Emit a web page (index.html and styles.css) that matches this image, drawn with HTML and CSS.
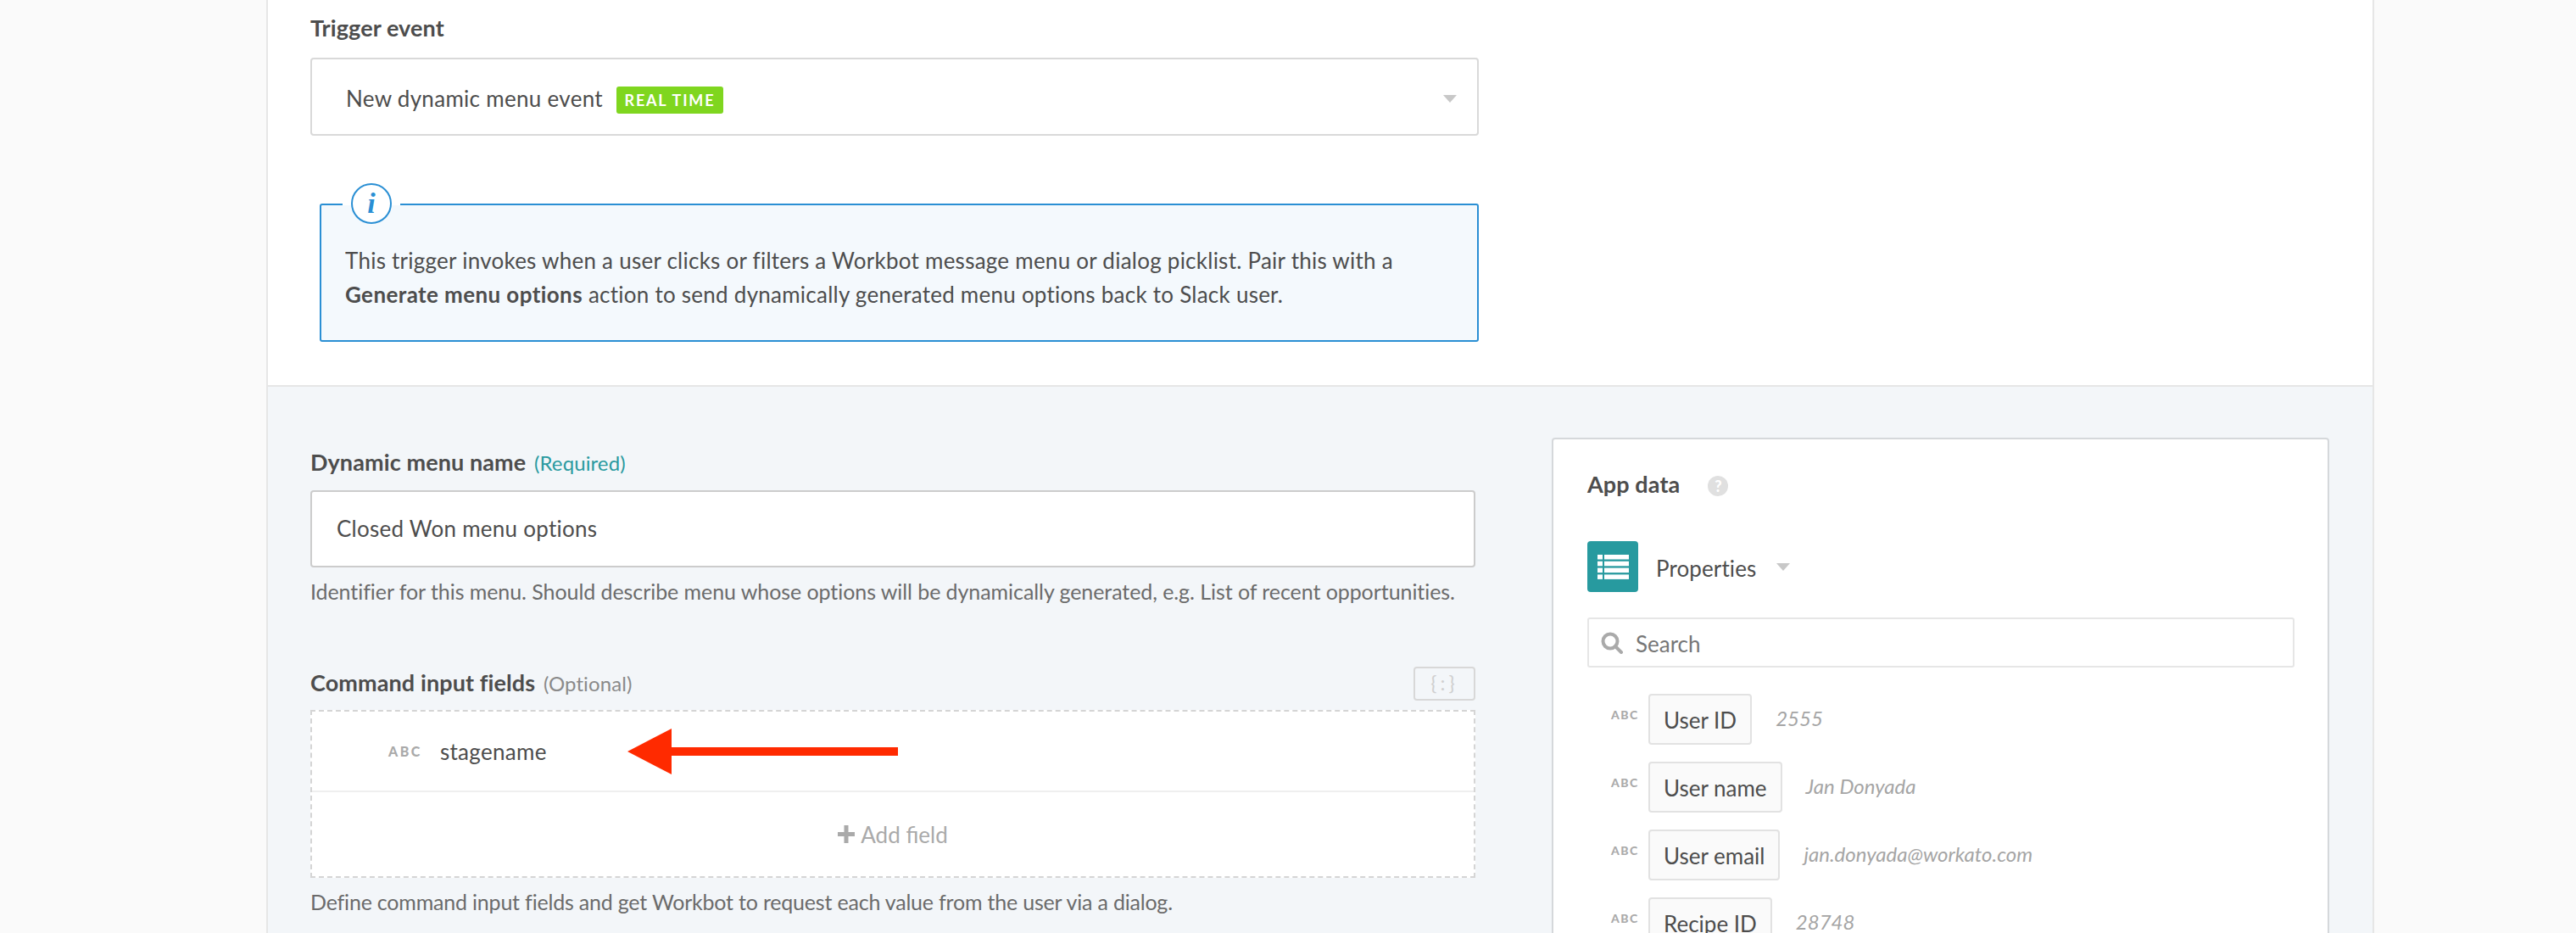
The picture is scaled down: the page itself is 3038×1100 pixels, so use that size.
FILE: index.html
```html
<!DOCTYPE html>
<html lang="en">
<head>
    <meta charset="UTF-8">
    <title>Trigger event</title>
    <link rel="stylesheet" href="styles.css">
</head>
<body>
    <div class="card">
        <section class="top">
            <div class="label trigger-label">Trigger event</div>
            <div class="select">
                <span class="select-text">New dynamic menu event</span>
                <span class="badge">REAL TIME</span>
                <span class="caret select-caret"></span>
            </div>
            <div class="info">
                <span class="info-gap"></span>
                <span class="info-icon">i</span>
                <p>This trigger invokes when a user clicks or filters a Workbot message menu or dialog picklist. Pair this with a<br><b>Generate menu options</b> action to send dynamically generated menu options back to Slack user.</p>
            </div>
        </section>

        <section class="bottom">
            <div class="form">
                <div class="label name-label">Dynamic menu name <span class="required">(Required)</span></div>
                <div class="input">Closed Won menu options</div>
                <div class="hint">Identifier for this menu. Should describe menu whose options will be dynamically generated, e.g. List of recent opportunities.</div>

                <div class="command-head">
                    <div class="label">Command input fields <span class="optional">(Optional)</span></div>
                    <div class="formula">{:}</div>
                </div>
                <div class="fields">
                    <div class="field-row">
                        <span class="abc">ABC</span>
                        <span class="field-name">stagename</span>
                        <svg class="arrow" width="320" height="54" viewBox="0 0 320 54"><path d="M0 27 L52 0 V22 H319 V32 H52 V54 Z" fill="#ff2a00"/></svg>
                    </div>
                    <div class="add-row">
                        <svg width="20" height="21" viewBox="0 0 20 21"><path d="M7.500 0h5v8h7.500v5h-7.500v8h-5v-8H0V8h7.500z" fill="#aaa"/></svg>
                        <span>Add field</span>
                    </div>
                </div>
                <div class="hint hint-short">Define command input fields and get Workbot to request each value from the user via a dialog.</div>
            </div>

            <aside class="panel">
                <div class="panel-head">
                    <span class="label">App data</span>
                    <span class="help">?</span>
                </div>
                <div class="source">
                    <span class="source-icon">
                        <svg width="37" height="29" viewBox="0 0 37 29" fill="#fff">
                            <rect width="6" height="5.500"/><rect x="8" width="29" height="5.500"/>
                            <rect y="7.800" width="6" height="5.500"/><rect x="8" y="7.800" width="29" height="5.500"/>
                            <rect y="15.600" width="6" height="5.500"/><rect x="8" y="15.600" width="29" height="5.500"/>
                            <rect y="23.400" width="6" height="5.500"/><rect x="8" y="23.400" width="29" height="5.500"/>
                        </svg>
                    </span>
                    <span class="source-name">Properties</span>
                    <span class="caret"></span>
                </div>
                <div class="search">
                    <svg width="27" height="26" viewBox="0 0 27 26" fill="none" stroke="#aaa" stroke-width="4"><circle cx="11" cy="11" r="8.500"/><path d="M17 17l7 7" stroke-linecap="round"/></svg>
                    <span>Search</span>
                </div>
                <div class="pill-row">
                    <span class="abc small">ABC</span>
                    <span class="pill">User ID</span>
                    <span class="value">2555</span>
                </div>
                <div class="pill-row">
                    <span class="abc small">ABC</span>
                    <span class="pill">User name</span>
                    <span class="value">Jan Donyada</span>
                </div>
                <div class="pill-row">
                    <span class="abc small">ABC</span>
                    <span class="pill">User email</span>
                    <span class="value">jan.donyada@workato.com</span>
                </div>
                <div class="pill-row">
                    <span class="abc small">ABC</span>
                    <span class="pill">Recipe ID</span>
                    <span class="value">28748</span>
                </div>
            </aside>
        </section>
    </div>
</body>
</html>
```

FILE: styles.css
```css
html, body {
    height: 100%;
}
body {
    background-color: #fafafa;
    font-family: "Lato", "Noto Sans", sans-serif;
    font-size: 26px;
    color: #4d4d4d;
    margin: 0;
    padding: 0;
    overflow: hidden;
}
.card {
    margin-left: 314px;
    width: 2482px;
    height: 1100px;
    overflow: hidden;
    border-left: 2px solid #e6e6e6;
    border-right: 2px solid #e6e6e6;
    background-color: #f3f6f9;
}
.label {
    font-weight: 700;
    font-size: 27px;
    line-height: 34px;
    letter-spacing: 0.1px;
}

/* top part */
.top {
    height: 454px;
    background-color: #fff;
    border-bottom: 2px solid #e6e6e6;
    padding-left: 50px;
}
.trigger-label {
    padding-top: 16px;
    height: 68px;
    box-sizing: border-box;
}
.select {
    width: 1378px;
    height: 92px;
    box-sizing: border-box;
    border: 2px solid #d9d9d9;
    border-radius: 4px;
    padding-left: 40px;
    display: flex;
    align-items: center;
}
.select-text {
    margin: 3px 16px 0 0;
    letter-spacing: 0.3px;
}
.badge {
    width: 126px;
    height: 32px;
    margin-top: 8px;
    line-height: 32px;
    text-align: center;
    background-color: #7fd61f;
    color: #fff;
    font-size: 18px;
    font-weight: 700;
    letter-spacing: 1.800px;
    border-radius: 3px;
}
.caret {
    width: 0;
    height: 0;
    border-left: 8px solid transparent;
    border-right: 8px solid transparent;
    border-top: 9px solid #c8c8c8;
}
.select-caret {
    margin: 4px 24px 0 auto;
}
.info {
    position: relative;
    margin: 80px 0 0 11px;
    width: 1367px;
    height: 163px;
    box-sizing: border-box;
    border: 2px solid #2a8fd4;
    border-radius: 3px;
    background-color: #f4f9fd;
    padding: 45px 0 0 28px;
}
.info p {
    margin: 0;
    line-height: 40px;
    letter-spacing: 0.25px;
}
.info b {
    letter-spacing: 0.4px;
}
.info-gap {
    position: absolute;
    left: 25px;
    top: -2px;
    width: 68px;
    height: 2px;
    background-color: #fff;
}
.info-icon {
    position: absolute;
    left: 35px;
    top: -26px;
    width: 48px;
    height: 48px;
    box-sizing: border-box;
    border: 2px solid #2a8fd4;
    border-radius: 50%;
    background-color: #fff;
    color: #2a8fd4;
    font-family: "Liberation Serif", serif;
    font-style: italic;
    font-weight: 700;
    font-size: 34px;
    line-height: 44px;
    text-align: center;
}

/* bottom part */
.bottom {
    display: flex;
    padding-left: 50px;
}
.form {
    width: 1374px;
    padding-top: 72px;
}
.name-label {
    height: 50px;
    box-sizing: border-box;
}
.required {
    color: #2a9aa0;
    font-size: 24px;
    font-weight: 400;
    margin-left: 3px;
}
.optional {
    color: #8a8a8a;
    font-size: 24px;
    font-weight: 400;
    margin-left: 3px;
}
.input {
    height: 91px;
    box-sizing: border-box;
    border: 2px solid #ccc;
    border-radius: 4px;
    background-color: #fff;
    padding-left: 29px;
    line-height: 87px;
    letter-spacing: 0.25px;
}
.hint {
    color: #6b6b6b;
    font-size: 25px;
    line-height: 36px;
    margin-top: 10px;
    letter-spacing: -0.07px;
}
.hint-short {
    letter-spacing: -0.2px;
}
.command-head {
    display: flex;
    justify-content: space-between;
    align-items: flex-end;
    margin-top: 62px;
    height: 60px;
    padding-bottom: 11px;
    box-sizing: border-box;
}
.command-head .label {
    margin-bottom: 3px;
}
.formula {
    width: 73px;
    height: 40px;
    box-sizing: border-box;
    border: 2px solid #d8d8d8;
    border-radius: 4px;
    color: #d0d0d0;
    font-size: 24px;
    line-height: 33px;
    letter-spacing: 4px;
    text-align: center;
}
.fields {
    height: 198px;
    box-sizing: border-box;
    border: 2px dashed #d5d5d5;
    background-color: #fff;
}
.field-row {
    position: relative;
    height: 95px;
    box-sizing: border-box;
    border-bottom: 2px solid #efefef;
    display: flex;
    align-items: center;
    padding-left: 90px;
}
.abc {
    color: #aaa;
    font-size: 16px;
    font-weight: 900;
    letter-spacing: 2.500px;
    margin-right: 21px;
}
.field-name {
    letter-spacing: 0.3px;
}
.arrow {
    position: absolute;
    left: 372px;
    top: 20px;
}
.add-row {
    height: 99px;
    display: flex;
    align-items: center;
    justify-content: center;
    gap: 7px;
    color: #aaa;
}
.panel {
    margin-left: 90px;
    width: 917px;
    height: 700px;
    box-sizing: border-box;
    margin-top: 60px;
    border: 2px solid #d5d8db;
    border-radius: 4px;
    background-color: #fff;
    padding: 0 40px;
}
.panel-head {
    height: 120px;
    box-sizing: border-box;
    padding-bottom: 14px;
    display: flex;
    align-items: center;
    gap: 33px;
}
.help {
    width: 24px;
    height: 24px;
    border-radius: 50%;
    margin-top: 4px;
    background-color: #e0e0e0;
    color: #fff;
    font-size: 18px;
    font-weight: 900;
    line-height: 24px;
    text-align: center;
}
.source {
    display: flex;
    align-items: center;
    height: 60px;
}
.source-icon {
    width: 60px;
    height: 60px;
    border-radius: 4px;
    background-color: #279a9f;
    display: flex;
    align-items: center;
    justify-content: center;
    margin-right: 21px;
}
.source-name {
    margin: 3px 24px 0 0;
    letter-spacing: 0.1px;
}
.search {
    width: 834px;
    height: 59px;
    box-sizing: border-box;
    border: 2px solid #e6e6e6;
    border-radius: 3px;
    margin-top: 30px;
    display: flex;
    align-items: center;
    gap: 14px;
    padding-left: 14px;
    color: #777;
}
.search span {
    margin-top: 2px;
}
.pill-row {
    display: flex;
    align-items: center;
    height: 60px;
    margin-bottom: 20px;
    padding-left: 28px;
}
.search + .pill-row {
    margin-top: 31px;
}
.abc.small {
    width: 34px;
    font-size: 14px;
    letter-spacing: 1.500px;
    margin-right: 10px;
    margin-top: -12px;
}
.pill {
    height: 60px;
    box-sizing: border-box;
    border: 2px solid #e2e2e2;
    border-radius: 4px;
    background-color: #fafafa;
    padding: 0 16px;
    line-height: 58px;
}
.value {
    margin-left: 28px;
    margin-top: -3px;
    color: #a5a5a5;
    font-size: 24px;
    font-style: italic;
}
```
